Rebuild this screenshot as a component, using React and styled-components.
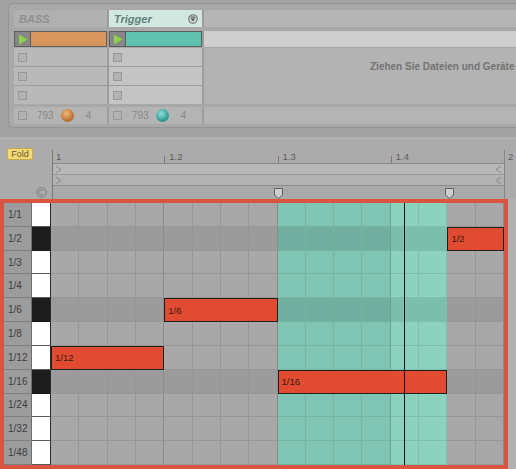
import React from "react";
import styled, { createGlobalStyle } from "styled-components";

const GlobalStyle = createGlobalStyle`
  html, body { margin: 0; padding: 0; background: #ababab; }
  body { font-family: "Liberation Sans", Arial, sans-serif; }
`;

const Page = styled.div`
  width: 516px;
  height: 469px;
  overflow: hidden;
  display: flex;
  flex-direction: column;
  background: #ababab;
`;

/* ---------- session view (top) ---------- */

const SessionArea = styled.div`
  flex: none;
  height: 140px;
  box-sizing: border-box;
  background: #a2a2a2;
  padding-top: 3px;
  border-bottom: 3px solid #afafaf;
`;

const Panel = styled.div`
  margin-left: 8px;
  height: 125px;
  box-sizing: border-box;
  border: 1px solid #939393;
  border-right: none;
  border-radius: 5px 0 0 5px;
  background: #a8a8a8;
  padding: 6px 0 0 5px;
  display: flex;
  flex-direction: column;
`;

const TrackRow = styled.div`
  display: flex;
  gap: 2px;
  height: ${(p) => p.$h}px;
  margin-top: ${(p) => p.$mt || 0}px;
  background: #9c9c9c;
  flex: none;
`;

const HeaderCell = styled.div`
  width: 93px;
  flex: none;
  box-sizing: border-box;
  display: flex;
  align-items: center;
  justify-content: space-between;
  padding: 0 4px 0 5px;
  background: ${(p) => (p.$active ? "#d3e7e1" : "#b0b0b0")};
  color: ${(p) => (p.$active ? "#5e817a" : "#8f8f8f")};
  font-style: italic;
  font-weight: bold;
  font-size: 11px;
`;

const RestCell = styled.div`
  flex: 1;
  background: ${(p) => p.$bg};
`;

const Clip = styled.div`
  width: 93px;
  flex: none;
  box-sizing: border-box;
  display: flex;
  border: 1px solid #5d5d5d;
  background: ${(p) => p.$color};
`;

const PlayBox = styled.div`
  width: 15px;
  flex: none;
  display: flex;
  align-items: center;
  justify-content: center;
  background: #868686;
  border-right: 1px solid #5d5d5d;
`;

const SlotBlock = styled.div`
  display: flex;
  gap: 2px;
  height: 56px;
  margin-top: 1px;
  flex: none;
  background: #9c9c9c;
`;

const SlotColumn = styled.div`
  width: 93px;
  flex: none;
  display: flex;
  flex-direction: column;
  gap: 1px;
`;

const SlotCell = styled.div`
  flex: 1;
  display: flex;
  align-items: center;
  padding-left: 4px;
  background: ${(p) => (p.$light ? "#c4c4c4" : "#b9b9b9")};
`;

const StopSquare = styled.div`
  width: 9px;
  height: 9px;
  box-sizing: border-box;
  border: 1px solid #979797;
  background: #b2b2b2;
  flex: none;
`;

const DropZone = styled.div`
  flex: 1;
  background: #b3b3b3;
  padding: 13px 0 0 166px;
  font-size: 10px;
  font-weight: bold;
  color: #727272;
  white-space: nowrap;
  overflow: hidden;
  line-height: 12px;
`;

const FooterCell = styled.div`
  width: 93px;
  flex: none;
  display: flex;
  align-items: center;
  padding-left: 4px;
  box-sizing: border-box;
  background: #b4b4b4;
  font-size: 10px;
  color: #8a8a8a;
`;

const Count = styled.span`
  margin-left: ${(p) => p.$ml}px;
`;

const Knob = styled.div`
  width: 13px;
  height: 13px;
  border-radius: 50%;
  margin-left: 7px;
  flex: none;
  background: ${(p) =>
    p.$teal
      ? "radial-gradient(circle at 40% 35%, #8fe0d6 0%, #3aa59c 55%, #1f6c68 100%)"
      : "radial-gradient(circle at 40% 35%, #f0b878 0%, #c47b3c 55%, #7c4a1e 100%)"};
`;

/* ---------- ruler ---------- */

const RulerRow = styled.div`
  flex: none;
  height: 59px;
  display: flex;
  background: #ababab;
`;

const Gutter = styled.div`
  width: 52px;
  flex: none;
  box-sizing: border-box;
  display: flex;
  flex-direction: column;
  justify-content: space-between;
  align-items: flex-start;
  padding: 8px 0 1px 7px;
`;

const FoldButton = styled.div`
  width: 26px;
  height: 12px;
  box-sizing: border-box;
  border: 1px solid #c8a84a;
  border-radius: 2px;
  background: #f3d97a;
  color: #6a5a26;
  font-size: 9px;
  line-height: 10px;
  text-align: center;
`;

const LoopIcon = styled.svg`
  align-self: flex-end;
  margin-right: 5px;
`;

const TimelineCol = styled.div`
  flex: none;
  padding-top: 10px;
  display: flex;
`;

const TimelineBody = styled.div`
  width: 453px;
  height: 49px;
  box-sizing: border-box;
  border-left: 1px solid #7a7a7a;
  border-right: 1px solid #858585;
  display: flex;
  flex-direction: column;
`;

const NumbersRow = styled.div`
  height: 13px;
  display: flex;
  flex: none;
`;

const BeatLabel = styled.div`
  flex: 1;
  position: relative;
  padding-left: ${(p) => (p.$first ? 3 : 5)}px;
  font-size: 9.5px;
  line-height: 13px;
  color: #5c5c5c;
  &::before {
    content: "";
    display: ${(p) => (p.$first ? "none" : "block")};
    position: absolute;
    left: 0;
    bottom: 0;
    width: 1px;
    height: 7px;
    background: #7a7a7a;
  }
`;

const EndLabel = styled.div`
  font-size: 9.5px;
  color: #5c5c5c;
  padding: 1px 0 0 3px;
`;

const Band = styled.div`
  height: 11px;
  flex: none;
  box-sizing: border-box;
  border-top: 1px solid ${(p) => p.$line};
  background: ${(p) => p.$bg};
  display: flex;
  align-items: center;
  justify-content: space-between;
  padding: 0 2px 0 2px;
`;

const MarkerBand = styled.div`
  flex: 1;
  position: relative;
  border-top: 1px solid #8e8e8e;
  background: #a9a9a9;
`;

const LoopMarker = styled.svg`
  position: absolute;
  top: 2px;
  left: ${(p) => p.$x}px;
`;

/* ---------- piano roll grid ---------- */

const GridRow = styled.div`
  flex: none;
  display: flex;
  height: 270px;
  background: #b0b0b0;
`;

const Frame = styled.div`
  width: 508px;
  height: 270px;
  flex: none;
  box-sizing: border-box;
  border: 4px solid #d9553f;
  position: relative;
  display: flex;
  flex-direction: column;
`;

const NoteRow = styled.div`
  flex: 1;
  display: flex;
  min-height: 0;
`;

const RowLabel = styled.div`
  width: 28px;
  flex: none;
  box-sizing: border-box;
  background: #9c9c9c;
  border-right: 1px solid #6e6e6e;
  border-bottom: 1px solid #7f7f7f;
  font-size: 10px;
  color: #3c3c3c;
  padding-left: 4px;
  display: flex;
  align-items: center;
`;

const Key = styled.div`
  width: 19px;
  flex: none;
  box-sizing: border-box;
  background: ${(p) => (p.$black ? "#1c1c1c" : "#ffffff")};
  border-right: 1px solid #2a2a2a;
  border-bottom: 1px solid ${(p) => (p.$black ? "#1c1c1c" : "#5c5c5c")};
`;

const Lane = styled.div`
  flex: 1;
  display: flex;
  position: relative;
`;

const tones = {
  gray: { bg: "#a8a8a8", dark: "#9b9b9b", line: "#979797", beat: "#8b8b8b" },
  tealA: { bg: "#80c5b3", dark: "#70ae9f", line: "#73b4a3", beat: "#67a393" },
  tealB: { bg: "#8dd2bf", dark: "#7cbdac", line: "#7cbfad", beat: "#70ad9d" },
};

const Cell = styled.div`
  flex: 1;
  box-sizing: border-box;
  background: ${(p) => (p.$dark ? tones[p.$tone].dark : tones[p.$tone].bg)};
  border-right: 1px solid ${(p) => (p.$beat ? tones[p.$tone].beat : tones[p.$tone].line)};
  border-bottom: 1px solid ${(p) => tones[p.$tone].line};
`;

const Note = styled.div`
  position: absolute;
  top: 0;
  bottom: 0;
  left: ${(p) => (p.$start * 100) / 16}%;
  width: ${(p) => (p.$span * 100) / 16}%;
  box-sizing: border-box;
  border: 1px solid #1f1f1f;
  background: #e14b31;
  color: #3a1a10;
  font-size: 9.5px;
  padding-left: 3px;
  display: flex;
  align-items: center;
`;

const Playhead = styled.div`
  position: absolute;
  top: 0;
  bottom: 0;
  left: 400px;
  width: 1px;
  background: #151515;
  z-index: 2;
`;

const rows = [
  { label: "1/1" },
  { label: "1/2", black: true, note: { start: 14, span: 2, text: "1/2" } },
  { label: "1/3" },
  { label: "1/4" },
  { label: "1/6", black: true, note: { start: 4, span: 4, text: "1/6" } },
  { label: "1/8" },
  { label: "1/12", note: { start: 0, span: 4, text: "1/12" } },
  { label: "1/16", black: true, note: { start: 8, span: 6, text: "1/16" } },
  { label: "1/24" },
  { label: "1/32" },
  { label: "1/48" },
];

const toneFor = (i) => (i >= 8 && i < 12 ? "tealA" : i >= 12 && i < 14 ? "tealB" : "gray");

const PlayTriangle = () => (
  <svg width="10" height="11" viewBox="0 0 10 11">
    <path d="M1 0.5 L9.5 5.5 L1 10.5 Z" fill="#8fd04c" />
  </svg>
);

const MenuIcon = () => (
  <svg width="10" height="10" viewBox="0 0 10 10">
    <circle cx="5" cy="5" r="4.3" fill="#c9d3d0" stroke="#6d7573" strokeWidth="1.1" />
    <rect x="2.6" y="2.6" width="4.8" height="1.1" fill="#4f5654" />
    <path d="M2.6 4.4 L7.4 4.4 L5 7.3 Z" fill="#4f5654" />
  </svg>
);

const Arrow = ({ dir }) => (
  <svg width="7" height="9" viewBox="0 0 7 9">
    <polyline
      points={dir === "right" ? "1,1 6,4.5 1,8" : "6,1 1,4.5 6,8"}
      fill="none"
      stroke="#8a8a8a"
      strokeWidth="1"
    />
  </svg>
);

const Marker = ({ x }) => (
  <LoopMarker $x={x} width="9" height="11" viewBox="0 0 9 11">
    <path d="M0.5 0.5 H8.5 V7 L4.5 10.5 L0.5 7 Z" fill="#cfcfcf" stroke="#5e5e5e" strokeWidth="1" />
  </LoopMarker>
);

const App = () => {
  return (
    <Page>
      <GlobalStyle />
      <SessionArea>
        <Panel>
          <TrackRow $h={17}>
            <HeaderCell>BASS</HeaderCell>
            <HeaderCell $active>
              Trigger
              <MenuIcon />
            </HeaderCell>
            <RestCell $bg="#b5b5b5" />
          </TrackRow>
          <TrackRow $h={16} $mt={4}>
            <Clip $color="#d8965d">
              <PlayBox>
                <PlayTriangle />
              </PlayBox>
            </Clip>
            <Clip $color="#5fc1ae">
              <PlayBox>
                <PlayTriangle />
              </PlayBox>
            </Clip>
            <RestCell $bg="#cecece" />
          </TrackRow>
          <SlotBlock>
            <SlotColumn>
              {[0, 1, 2].map((i) => (
                <SlotCell key={i}>
                  <StopSquare />
                </SlotCell>
              ))}
            </SlotColumn>
            <SlotColumn>
              {[0, 1, 2].map((i) => (
                <SlotCell key={i} $light>
                  <StopSquare />
                </SlotCell>
              ))}
            </SlotColumn>
            <DropZone>Ziehen Sie Dateien und Geräte hierher</DropZone>
          </SlotBlock>
          <TrackRow $h={17} $mt={3}>
            <FooterCell>
              <StopSquare />
              <Count $ml={10}>793</Count>
              <Knob />
              <Count $ml={12}>4</Count>
            </FooterCell>
            <FooterCell>
              <StopSquare />
              <Count $ml={10}>793</Count>
              <Knob $teal />
              <Count $ml={12}>4</Count>
            </FooterCell>
            <RestCell $bg="#b4b4b4" />
          </TrackRow>
        </Panel>
      </SessionArea>

      <RulerRow>
        <Gutter>
          <FoldButton>Fold</FoldButton>
          <LoopIcon width="11" height="11" viewBox="0 0 11 11">
            <circle cx="5.5" cy="5.5" r="4.8" fill="none" stroke="#7c7c7c" strokeWidth="1" />
            <path d="M7.3 3.6 A2.6 2.6 0 1 0 7.3 7.4" fill="none" stroke="#7c7c7c" strokeWidth="1" />
          </LoopIcon>
        </Gutter>
        <TimelineCol>
          <TimelineBody>
            <NumbersRow>
              {["1", "1.2", "1.3", "1.4"].map((b, i) => (
                <BeatLabel key={b} $first={i === 0}>
                  {b}
                </BeatLabel>
              ))}
            </NumbersRow>
            <Band $line="#8a8a8a" $bg="#b7b7b7">
              <Arrow dir="right" />
              <Arrow dir="left" />
            </Band>
            <Band $line="#9b9b9b" $bg="#b2b2b2">
              <Arrow dir="right" />
              <Arrow dir="left" />
            </Band>
            <MarkerBand>
              <Marker x={221} />
              <Marker x={392} />
            </MarkerBand>
          </TimelineBody>
          <EndLabel>2</EndLabel>
        </TimelineCol>
      </RulerRow>

      <GridRow>
        <Frame>
          {rows.map((r) => (
            <NoteRow key={r.label}>
              <RowLabel>{r.label}</RowLabel>
              <Key $black={r.black} />
              <Lane>
                {Array.from({ length: 16 }, (_, i) => (
                  <Cell key={i} $tone={toneFor(i)} $dark={r.black} $beat={i % 4 === 3} />
                ))}
                {r.note && (
                  <Note $start={r.note.start} $span={r.note.span}>
                    {r.note.text}
                  </Note>
                )}
              </Lane>
            </NoteRow>
          ))}
          <Playhead />
        </Frame>
      </GridRow>
    </Page>
  );
};

export default App;
